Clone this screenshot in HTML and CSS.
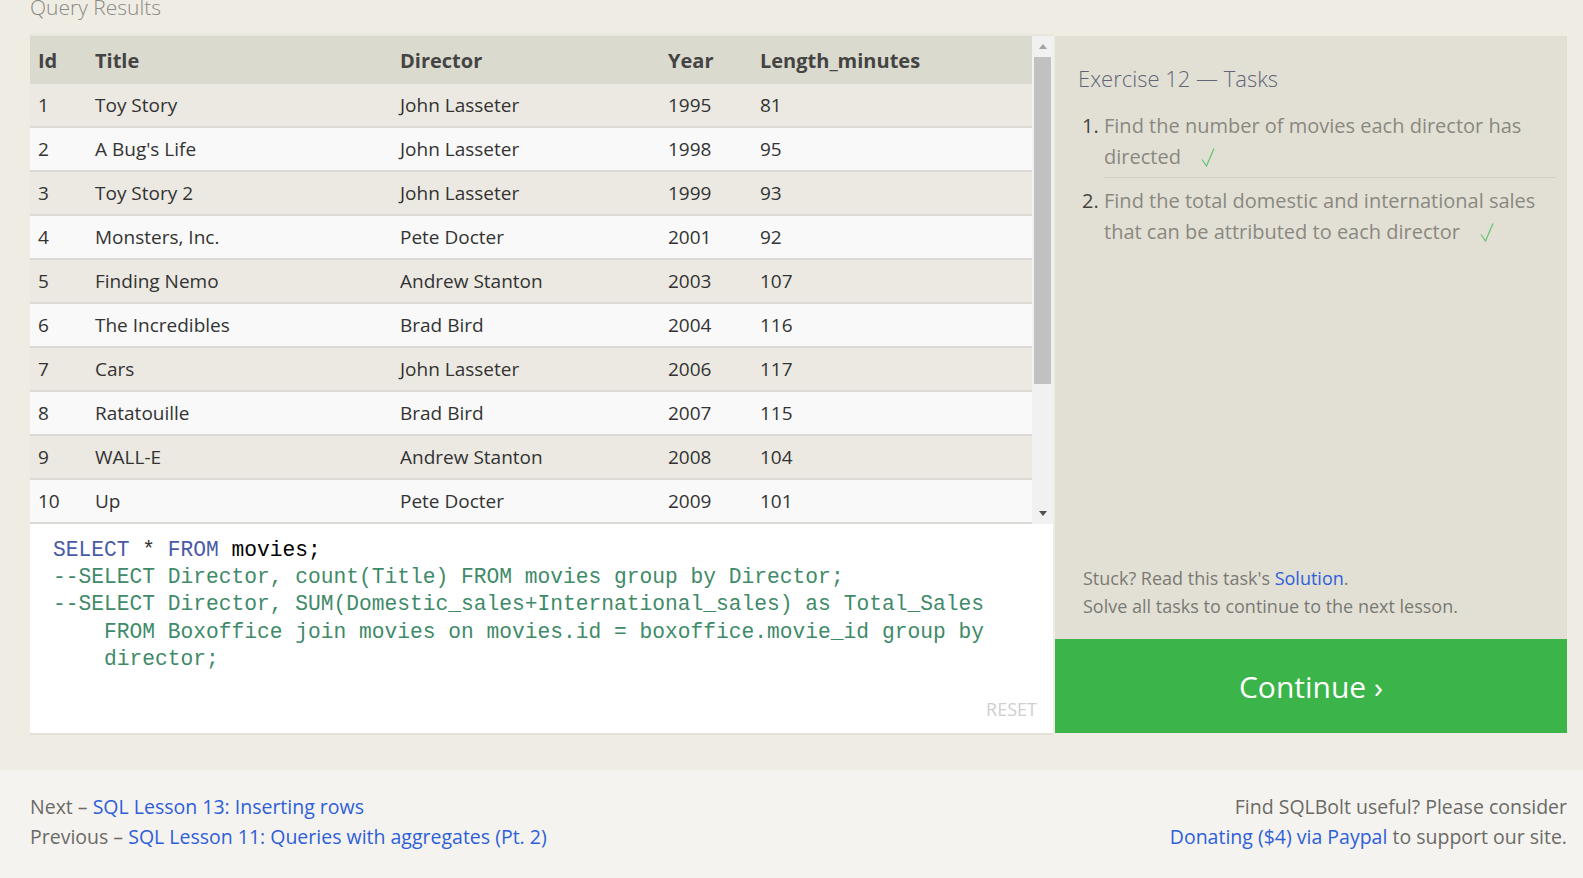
FILE: index.html
```html
<!DOCTYPE html>
<html lang="en">
<head>
<meta charset="utf-8">
<title>SQLBolt - Lesson 12</title>
<link rel="stylesheet" href="styles.css">
</head>
<body>
<div class="page">
  <div class="section-title">Query Results</div>
  <div class="main">
    <div class="left">
      <div class="results">
        <div class="viewport">
          <table class="grid">
            <colgroup>
              <col class="c-id"><col class="c-title"><col class="c-dir"><col class="c-year"><col class="c-len">
            </colgroup>
            <thead>
              <tr><th>Id</th><th>Title</th><th>Director</th><th>Year</th><th>Length_minutes</th></tr>
            </thead>
            <tbody>
              <tr><td>1</td><td>Toy Story</td><td>John Lasseter</td><td>1995</td><td>81</td></tr>
              <tr><td>2</td><td>A Bug's Life</td><td>John Lasseter</td><td>1998</td><td>95</td></tr>
              <tr><td>3</td><td>Toy Story 2</td><td>John Lasseter</td><td>1999</td><td>93</td></tr>
              <tr><td>4</td><td>Monsters, Inc.</td><td>Pete Docter</td><td>2001</td><td>92</td></tr>
              <tr><td>5</td><td>Finding Nemo</td><td>Andrew Stanton</td><td>2003</td><td>107</td></tr>
              <tr><td>6</td><td>The Incredibles</td><td>Brad Bird</td><td>2004</td><td>116</td></tr>
              <tr><td>7</td><td>Cars</td><td>John Lasseter</td><td>2006</td><td>117</td></tr>
              <tr><td>8</td><td>Ratatouille</td><td>Brad Bird</td><td>2007</td><td>115</td></tr>
              <tr><td>9</td><td>WALL-E</td><td>Andrew Stanton</td><td>2008</td><td>104</td></tr>
              <tr><td>10</td><td>Up</td><td>Pete Docter</td><td>2009</td><td>101</td></tr>
              <tr><td>11</td><td>Toy Story 3</td><td>Lee Unkrich</td><td>2010</td><td>103</td></tr>
              <tr><td>12</td><td>Cars 2</td><td>John Lasseter</td><td>2011</td><td>120</td></tr>
              <tr><td>13</td><td>Brave</td><td>Brenda Chapman</td><td>2012</td><td>102</td></tr>
              <tr><td>14</td><td>Monsters University</td><td>Dan Scanlon</td><td>2013</td><td>110</td></tr>
            </tbody>
          </table>
        </div>
        <div class="scrollbar">
          <div class="sb-btn"><span class="arrow-up"></span></div>
          <div class="sb-thumb"></div>
          <div class="sb-rest"></div>
          <div class="sb-btn"><span class="arrow-down"></span></div>
        </div>
      </div>
      <div class="editor">
        <div class="code">
          <div class="line"><span class="kw">SELECT</span> <span class="op">*</span> <span class="kw">FROM</span> <span class="id">movies;</span></div>
          <div class="line cm">--SELECT Director, count(Title) FROM movies group by Director;</div>
          <div class="line cm">--SELECT Director, SUM(Domestic_sales+International_sales) as Total_Sales</div>
          <div class="line cm cont">FROM Boxoffice join movies on movies.id = boxoffice.movie_id group by</div>
          <div class="line cm cont">director;</div>
        </div>
        <div class="reset">RESET</div>
      </div>
    </div>
    <div class="right">
      <div class="tasks">
        <div class="tasks-title">Exercise 12 — Tasks</div>
        <ol class="task-list">
          <li>Find the number of movies each director has directed<svg class="check" width="14" height="20" viewBox="0 0 14 20"><polyline points="1,12.5 5.5,19 13,1.5" fill="none" stroke="#6cc47a" stroke-width="1.3"/></svg></li>
          <li>Find the total domestic and international sales that can be attributed to each director<svg class="check" width="14" height="20" viewBox="0 0 14 20"><polyline points="1,12.5 5.5,19 13,1.5" fill="none" stroke="#6cc47a" stroke-width="1.3"/></svg></li>
        </ol>
        <div class="stuck">
          <div>Stuck? Read this task's <a href="#" class="link">Solution</a>.</div>
          <div>Solve all tasks to continue to the next lesson.</div>
        </div>
      </div>
      <div class="continue">Continue ›</div>
    </div>
  </div>
</div>
<div class="footer">
  <div class="nav">
    <div>Next – <a href="#" class="link">SQL Lesson 13: Inserting rows</a></div>
    <div>Previous – <a href="#" class="link">SQL Lesson 11: Queries with aggregates (Pt. 2)</a></div>
  </div>
  <div class="donate">
    <div>Find SQLBolt useful? Please consider</div>
    <div><a href="#" class="link">Donating ($4) via Paypal</a> to support our site.</div>
  </div>
</div>
</body>
</html>
```
FILE: styles.css
```css
html, body {
  margin: 0;
  padding: 0;
}
body {
  background: #efece4;
  font-family: "Open Sans", "Noto Sans", sans-serif;
  color: #333;
  overflow: hidden;
  height: 878px;
}
.page {
  padding: 0 16px 0 30px;
}
.section-title {
  font-size: 21px;
  line-height: 30px;
  height: 30px;
  margin-top: -8px;
  margin-bottom: 12px;
  color: #8a8a86;
  font-weight: 300;
}
.main {
  display: flex;
  align-items: flex-start;
}
.left {
  width: 1023px;
  display: flex;
  flex-direction: column;
}
.results {
  display: flex;
  height: 488px;
  border-top: 2px solid #e8e6df;
}
.viewport {
  width: 1002px;
  overflow: hidden;
}
.grid {
  width: 1002px;
  border-collapse: collapse;
  table-layout: fixed;
  font-size: 19px;
}
.c-id { width: 57px; }
.c-title { width: 305px; }
.c-dir { width: 268px; }
.c-year { width: 92px; }
.c-len { width: 280px; }
.grid th {
  background: #dbdace;
  color: #444;
  font-size: 20px;
  font-weight: 700;
  text-align: left;
  height: 48px;
  padding: 0 0 0 8px;
}
.grid td {
  height: 42px;
  padding: 0 0 0 8px;
  border-bottom: 2px solid #dcdad4;
  color: #333;
  white-space: nowrap;
}
.grid tbody tr:nth-child(odd) td { background: #ebe9e2; }
.grid tbody tr:nth-child(even) td { background: #f9f9f9; }
.scrollbar {
  width: 21px;
  background: #f1f1f1;
  display: flex;
  flex-direction: column;
}
.sb-btn {
  height: 21px;
  display: flex;
  align-items: center;
  justify-content: center;
}
.arrow-up {
  width: 0; height: 0;
  border-left: 4px solid transparent;
  border-right: 4px solid transparent;
  border-bottom: 5px solid #a3a3a3;
}
.arrow-down {
  width: 0; height: 0;
  border-left: 4px solid transparent;
  border-right: 4px solid transparent;
  border-top: 5px solid #505050;
}
.sb-thumb {
  height: 327px;
  margin: 0 2px;
  background: #c1c1c1;
}
.sb-rest { flex: 1; }
.editor {
  height: 196px;
  background: #fff;
  border-bottom: 2px solid #e3e1da;
  padding: 13px 16px 0 23px;
  display: flex;
  flex-direction: column;
}
.code {
  font-family: "Liberation Mono", "DejaVu Sans Mono", monospace;
  font-size: 21.25px;
  line-height: 27.2px;
}
.line {
  white-space: pre;
}
.kw { color: #4a5aa6; }
.op { color: #333; }
.id { color: #000; }
.cm { color: #3f8a68; }
.cont { padding-left: 4ch; }
.reset {
  margin-top: auto;
  margin-bottom: 10px;
  align-self: flex-end;
  font-size: 18px;
  line-height: 27px;
  color: #cfcfcf;
}
.right {
  flex: 1;
  height: 697px;
  margin-left: 2px;
  margin-top: 2px;
  display: flex;
  flex-direction: column;
}
.tasks {
  flex: 1;
  background: #e2e0d5;
  padding: 27px 11px 19px 23px;
  display: flex;
  flex-direction: column;
}
.tasks-title {
  font-size: 22px;
  line-height: 30px;
  color: #5f6675;
  font-weight: 300;
}
.task-list {
  margin: 17px 0 0 0;
  padding: 0 0 0 26px;
  font-size: 20px;
  line-height: 31px;
  color: #8a8880;
}
.task-list li {
  padding: 0 0 5px 0;
}
.task-list li + li {
  border-top: 1px solid #d3d1c6;
  padding-top: 7px;
}
.task-list li::marker {
  color: #444;
}
.check {
  margin-left: 20px;
  vertical-align: -3px;
}
.stuck {
  margin-top: auto;
  padding-left: 5px;
  font-size: 18px;
  line-height: 27.5px;
  color: #7a7a74;
}
.link {
  color: #2d5fd9;
  text-decoration: none;
}
.continue {
  height: 94px;
  flex: none;
  background: #3bb54a;
  color: #fff;
  font-size: 30px;
  display: flex;
  align-items: center;
  justify-content: center;
}
.footer {
  margin-top: 35px;
  background: #f5f3ef;
  height: 108px;
  box-sizing: border-box;
  padding: 22px 16px 0 30px;
  display: flex;
  justify-content: space-between;
  font-size: 19.5px;
  line-height: 30px;
  color: #6a6a66;
}
.donate {
  text-align: right;
}
```
